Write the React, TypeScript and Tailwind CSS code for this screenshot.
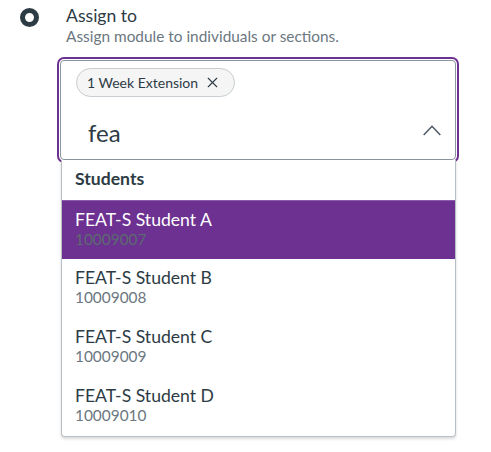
import { X } from 'lucide-react';

const students = [
  { name: 'FEAT-S Student A', id: '10009007' },
  { name: 'FEAT-S Student B', id: '10009008' },
  { name: 'FEAT-S Student C', id: '10009009' },
  { name: 'FEAT-S Student D', id: '10009010' },
];

export default function App() {
  return (
    <div className="w-[491px] h-[452px] bg-white text-[#2d3b45]" style={{ fontFamily: 'Lato, "Noto Sans", sans-serif' }}>
      {/* Radio + label */}
      <div className="flex pt-[5px] pl-[20px]">
        <div className="mt-[3px] w-[19px] h-[19px] rounded-full border-[5px] border-[#2d3b45] bg-white shrink-0" />
        <div className="ml-[27px]">
          <div className="text-[17.6px] leading-[21px]">Assign to</div>
          <div className="text-[15.4px] leading-[20px] text-[#6b7780]">Assign module to individuals or sections.</div>
        </div>
      </div>

      {/* Combobox input */}
      <div className="mt-[14px] ml-[60px] w-[396px] h-[100px] border border-[#8b959e] rounded-[4px] shadow-[0_0_0_1px_#fff,0_0_0_3px_#6c3191] bg-white">
        <div className="pt-[7px] pl-[15px]">
          <span className="inline-flex items-center h-[29px] pl-[10px] pr-[13px] rounded-full border border-[#c7cdd1] bg-[#f5f5f5] text-[14px] text-[#2d3b45]">
            1 Week Extension
            <X className="ml-[6px] w-[17px] h-[17px]" strokeWidth={1.6} />
          </span>
        </div>
        <div className="mt-[16px] h-[40px] flex items-center pl-[27px] pr-[14px]">
          <span className="flex-1 text-[24px] leading-[40px]">fea</span>
          <svg className="mb-[6px]" width="18" height="11" viewBox="0 0 18 11" fill="none">
            <polyline points="0.7,10 9,1.2 17.3,10" stroke="#4a5560" strokeWidth="1.4" />
          </svg>
        </div>
      </div>

      {/* Dropdown list */}
      <div className="ml-[61px] w-[395px] bg-white border-x border-b border-[#b8bfc5] rounded-b-[4px] shadow-[0_2px_3px_rgba(0,0,0,0.15)]">
        <div className="px-[13px] pt-[9px] pb-[11px] text-[17.6px] leading-[20px] font-bold">Students</div>
        {students.map((s, i) => (
          <div
            key={s.id}
            className={
              i === 0
                ? 'h-[59px] px-[13px] pt-[8px] bg-[#6c3191] border-t border-[#8a5aa8] text-white'
                : 'h-[59px] px-[13px] pt-[8px]'
            }
          >
            <div className="text-[17.6px] leading-[21px]">{s.name}</div>
            <div className={i === 0 ? 'text-[15.4px] leading-[18px] text-[#5c6a70]' : 'text-[15.4px] leading-[18px] text-[#6b7780]'}>
              {s.id}
            </div>
          </div>
        ))}
      </div>
    </div>
  );
}
